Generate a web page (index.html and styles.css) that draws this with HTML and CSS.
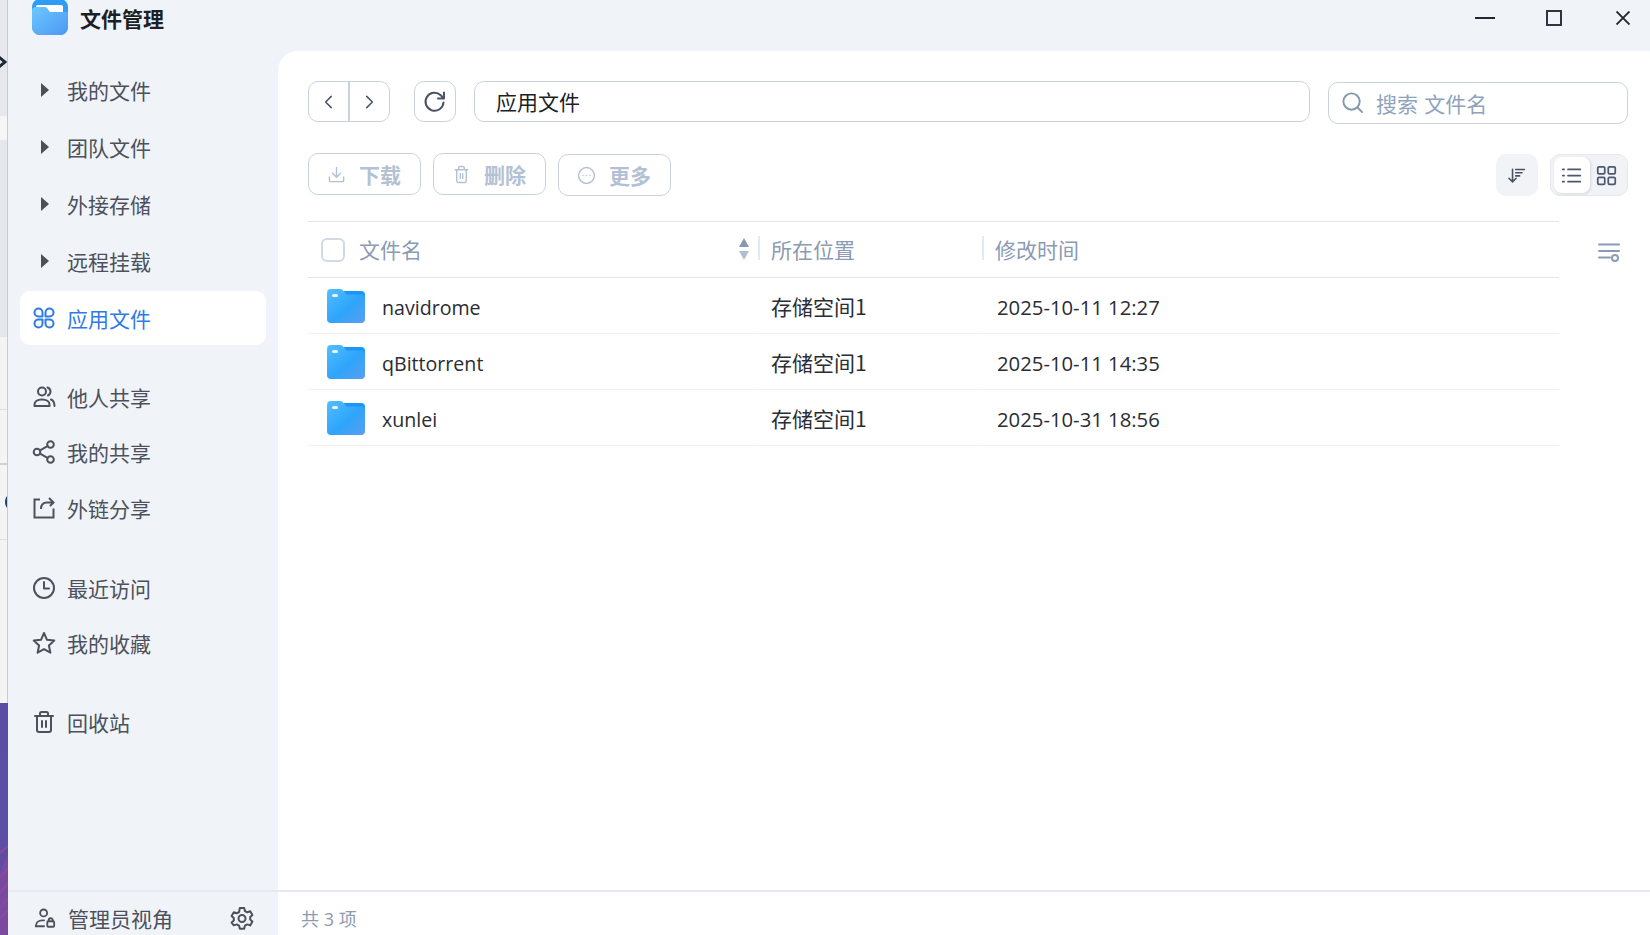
FILE: index.html
```html
<!DOCTYPE html>
<html lang="zh-CN">
<head>
<meta charset="utf-8">
<title>文件管理</title>
<link rel="stylesheet" href="styles.css">
</head>
<body>
<div class="desk">
  <div class="seg seg-a"><svg class="desk-glyph" viewBox="0 0 8 14"><path d="M-1 2 L5 7 L-1 12" fill="none" stroke="#1c2a3a" stroke-width="3"/></svg></div>
  <div class="seg seg-b"></div>
  <div class="seg seg-c"></div>
  <div class="seg seg-d"></div>
  <div class="seg seg-e"></div>
  <div class="seg seg-f"><span class="desk-c"></span></div>
  <div class="seg seg-g"></div>
  <div class="seg seg-h"><svg class="desk-lines" viewBox="0 0 8 232" preserveAspectRatio="none"><path d="M0 150L8 143M0 175L8 165M0 190L8 180M0 205L8 195M0 215L8 207" stroke="#8a4a9e" stroke-width="2" fill="none"/><path d="M0 232V170L8 150V226L7 232Z" fill="#8a4a9e" opacity=".55"/></svg></div>
</div>
<div class="window">
  <header class="titlebar">
    <div class="brand">
      <svg class="logo" viewBox="0 0 36 36"><defs><linearGradient id="lg" x1="0" y1="0" x2="1" y2="1"><stop offset="0" stop-color="#6cc8ff"/><stop offset="1" stop-color="#4c97f3"/></linearGradient></defs><rect width="36" height="36" rx="8" fill="#2f9df5"/><rect x="4" y="6" width="27" height="10" rx="2" fill="#fff"/><path d="M0 12a4 4 0 0 1 4-4h9a3 3 0 0 1 2 1l3 4h18v15a8 8 0 0 1-8 8H8a8 8 0 0 1-8-8z" fill="url(#lg)"/></svg>
      <span class="app-name">文件管理</span>
    </div>
    <div class="win-controls">
      <svg class="win-min" viewBox="0 0 20 2"><path d="M0 1H20" stroke="#22262e" stroke-width="2"/></svg>
      <svg class="win-max" viewBox="0 0 16 16"><rect x="1" y="1" width="14" height="14" fill="none" stroke="#2e3440" stroke-width="2"/></svg>
      <svg class="win-close" viewBox="0 0 14 14"><path d="M0.5 0.5L13.5 13.5M13.5 0.5L0.5 13.5" stroke="#22262e" stroke-width="1.9"/></svg>
    </div>
  </header>
  <div class="content">
    <aside class="sidebar">
      <nav class="nav">
        <div class="group group-tree">
          <div class="item"><span class="ico"><i class="caret"></i></span>我的文件</div>
          <div class="item"><span class="ico"><i class="caret"></i></span>团队文件</div>
          <div class="item"><span class="ico"><i class="caret"></i></span>外接存储</div>
          <div class="item"><span class="ico"><i class="caret"></i></span>远程挂载</div>
          <div class="item active"><span class="ico"><svg class="ic" viewBox="0 0 24 24"><path d="M10.5 10.5H6.5a4 4 0 1 1 4-4zM13.5 10.5h4a4 4 0 1 0-4-4zM10.5 13.5H6.5a4 4 0 1 0 4 4zM13.5 13.5h4a4 4 0 1 1-4 4z"/></svg></span>应用文件</div>
        </div>
        <div class="group group-share">
          <div class="item"><span class="ico"><svg class="ic" viewBox="0 0 24 24"><circle cx="10" cy="6.500" r="4"/><path d="M2.500 21v-1.500c0-3 3-5 7.500-5s7.500 2 7.500 5V21zM15.500 2.500c2 .8 3 2.200 3 4s-1 3.200-2.500 4M19 14.500c2 .8 3.500 2.500 3.500 6.500"/></svg></span>他人共享</div>
          <div class="item"><span class="ico"><svg class="ic" viewBox="0 0 24 24"><circle cx="18.500" cy="4.500" r="3.300"/><circle cx="5" cy="12" r="3.300"/><circle cx="18.500" cy="19.500" r="3.300"/><path d="M8 10.300l7.500-4.200M8 13.700l7.500 4.200"/></svg></span>我的共享</div>
          <div class="item"><span class="ico"><svg class="ic ic-sq" viewBox="0 0 24 24"><path d="M8 3.500H2.500v18h19v-9M9 13c0-4 2-6.500 6-6.500h6M17 2l4.500 4.500L18 10"/></svg></span>外链分享</div>
        </div>
        <div class="group group-recent">
          <div class="item"><span class="ico"><svg class="ic" viewBox="0 0 24 24"><circle cx="12" cy="12" r="10"/><path d="M12 6v6.500h5"/></svg></span>最近访问</div>
          <div class="item"><span class="ico"><svg class="ic" viewBox="0 0 24 24"><path d="M12 2l3 6.800 7.300.8-5.400 4.900 1.500 7.200L12 18.100l-6.400 3.600 1.500-7.200L1.700 9.600 9 8.800z"/></svg></span>我的收藏</div>
        </div>
        <div class="group group-trash">
          <div class="item"><span class="ico"><svg class="ic" viewBox="0 0 24 24"><path d="M3 6h18M8 6V3.500a1.500 1.500 0 0 1 1.500-1.500h5A1.500 1.500 0 0 1 16 3.500V6M5 6v14a2 2 0 0 0 2 2h10a2 2 0 0 0 2-2V6M10 11v6M14 11v6"/></svg></span>回收站</div>
        </div>
      </nav>
      <footer class="side-foot">
        <span class="ico"><svg class="ic ic-admin" viewBox="0 0 24 24"><circle cx="10.500" cy="6.500" r="3.800"/><path d="M2 21c0-4 3-6.500 7-6.500h2"/><path d="M2 21h9"/><rect x="14.500" y="15.500" width="7.500" height="6" rx="1"/><path d="M16 15.500v-1a2.200 2.200 0 0 1 4.500 0v1"/></svg></span>
        <span class="foot-label">管理员视角</span>
        <svg class="ic gear" viewBox="0 0 24 24"><path d="M9.800 2h4.400l.7 3 2.400 1.300 2.900-1 2.200 3.700-2.200 2v2.600l2.200 2-2.200 3.800-2.900-1-2.400 1.300-.7 3H9.800l-.7-3-2.400-1.300-2.900 1L1.600 16.600l2.200-2V12l-2.200-2 2.200-3.700 2.900 1L9.100 6z"/><circle cx="12" cy="12.500" r="3.500"/></svg>
      </footer>
    </aside>
    <main class="main">
      <div class="panel">
        <div class="toolbar">
          <div class="nav-btns">
            <button class="nbtn nbtn-prev"><svg class="ic ic-sm" viewBox="0 0 24 24"><path d="M15 4.500L7.500 12l7.500 7.500"/></svg></button>
            <button class="nbtn nbtn-next"><svg class="ic ic-sm" viewBox="0 0 24 24"><path d="M9 4.500l7.500 7.500L9 19.500"/></svg></button>
          </div>
          <button class="refresh"><svg class="ic ic-re" viewBox="0 0 24 24"><path d="M20.500 12.500a9 9 0 1 1-2.800-7.300L20.500 8M21 2.500V8.500h-6"/></svg></button>
          <div class="path">应用文件</div>
          <div class="search">
            <svg class="ic ic-search" viewBox="0 0 24 24"><circle cx="11" cy="11" r="8.500"/><path d="M17.500 17.500L22 22"/></svg>
            <span class="ph">搜索 文件名</span>
          </div>
        </div>
        <div class="actions">
          <button class="act"><svg class="ic" viewBox="0 0 24 24"><path d="M12 3v12M7 10.500l5 5 5-5M3 15v4.500a1.500 1.500 0 0 0 1.500 1.500h15a1.500 1.500 0 0 0 1.500-1.500V15"/></svg>下载</button>
          <button class="act"><svg class="ic" viewBox="0 0 24 24"><path d="M4 6h16M8.500 6V3.500A1.500 1.500 0 0 1 10 2h4a1.500 1.500 0 0 1 1.500 1.500V6M6 6v14a2 2 0 0 0 2 2h8a2 2 0 0 0 2-2V6M10.500 11v6M13.500 11v6"/></svg>删除</button>
          <button class="act act-low"><svg class="ic" viewBox="0 0 24 24"><circle cx="12" cy="12" r="10"/><path class="dots" d="M7.200 12h.6M11.700 12h.6M16.200 12h.6"/></svg>更多</button>
          <div class="spacer"></div>
          <button class="sort"><svg class="ic ic-sort" viewBox="0 0 24 24"><path d="M7 4v16M2.500 15.500L7 20l4.500-4.500M11 4.500h11M11 8.500h8M11 12.500h5"/></svg></button>
          <div class="views">
            <button class="view on"><svg class="ic ic-view" viewBox="0 0 24 24"><path d="M8 5h14M8 12h14M8 19h14M2 5h1.500M2 12h1.500M2 19h1.500"/></svg></button>
            <button class="view view-grid"><svg class="ic ic-view" viewBox="0 0 24 24"><rect x="2" y="2" width="8" height="8" rx="1.500"/><rect x="14" y="2" width="8" height="8" rx="1.500"/><rect x="2" y="14" width="8" height="8" rx="1.500"/><rect x="14" y="14" width="8" height="8" rx="1.500"/></svg></button>
          </div>
        </div>
        <div class="list-wrap">
          <div class="table">
            <div class="thead">
              <div class="th th-name"><i class="check"></i><span>文件名</span><span class="arrows"><i class="up"></i><i class="down"></i></span></div>
              <div class="th th-loc">所在位置</div>
              <div class="th th-time">修改时间</div>
            </div>
            <div class="row">
              <div class="td td-name"><svg class="folder" viewBox="0 0 38 34"><use href="#fold"/></svg>navidrome</div>
              <div class="td td-loc">存储空间1</div>
              <div class="td td-time">2025-10-11 12:27</div>
            </div>
            <div class="row">
              <div class="td td-name"><svg class="folder" viewBox="0 0 38 34"><use href="#fold"/></svg>qBittorrent</div>
              <div class="td td-loc">存储空间1</div>
              <div class="td td-time">2025-10-11 14:35</div>
            </div>
            <div class="row">
              <div class="td td-name"><svg class="folder" viewBox="0 0 38 34"><use href="#fold"/></svg>xunlei</div>
              <div class="td td-loc">存储空间1</div>
              <div class="td td-time">2025-10-31 18:56</div>
            </div>
          </div>
          <div class="col-set"><svg class="ic ic-col" viewBox="0 0 22 22"><path d="M1 2.500h20M1 9h20M1 15.500h11"/><circle cx="17" cy="16" r="3"/></svg></div>
        </div>
      </div>
      <footer class="main-foot">共 3 项</footer>
    </main>
  </div>
</div>
<svg class="defs" width="0" height="0"><defs>
  <linearGradient id="fg" x1="0" y1="0" x2="1" y2="1"><stop offset="0" stop-color="#52bfff"/><stop offset=".55" stop-color="#2ea4fb"/><stop offset="1" stop-color="#5a9ff0"/></linearGradient>
  <symbol id="fold" viewBox="0 0 38 34"><path d="M14 2h20a4 4 0 0 1 4 4v6H14z" fill="#1b97f3"/><path d="M0 4a4 4 0 0 1 4-4h9a4 4 0 0 1 2.500 1l4.500 4.500h14a4 4 0 0 1 4 3V30a4 4 0 0 1-4 4H4a4 4 0 0 1-4-4z" fill="url(#fg)"/><rect x="5" y="5" width="6" height="3" rx="1.500" fill="#e8f6ff"/></symbol>
</defs></svg>
</body>
</html>
```
FILE: styles.css
```css
* { box-sizing: border-box; }
html, body { margin: 0; height: 935px; overflow: hidden; }
body {
  display: flex;
  width: 1650px;
  font-family: "Noto Sans CJK SC", "Open Sans", sans-serif;
  font-size: 21px;
  background: #f0f4f9;
}
button { font: inherit; padding: 0; margin: 0; background: none; border: 0; }
.defs { position: absolute; }

/* desktop strip behind the window */
.desk { width: 8px; height: 935px; display: flex; flex-direction: column; flex: none; border-right: 1px solid #c9cbd0; }
.seg { position: relative; flex: none; overflow: hidden; }
.seg-a { height: 116px; background: #e6e8ed; }
.seg-b { height: 24px; background: #f6f6f7; }
.seg-c { height: 197px; background: #e4e7ec; }
.seg-d { height: 73px; background: #f4f4f5; border-bottom: 1px solid #dcdee2; }
.seg-e { height: 55px; background: #f4f4f5; border-bottom: 2px solid #cfd3da; }
.seg-f { height: 75px; background: #f4f4f5; border-bottom: 1px solid #dcdee2; }
.seg-g { height: 163px; background: #f4f4f5; }
.seg-h { height: 232px; background: linear-gradient(180deg, #5b4da4, #5a4ea6 50%, #6a4a9e); margin-right: -1px; }
.desk-glyph { position: absolute; left: 0; top: 55px; width: 8px; height: 14px; }
.desk-c { position: absolute; left: 5px; top: 31px; width: 6px; height: 12px; border: 2px solid #1d3f78; border-radius: 50%; }
.desk-lines { position: absolute; inset: 0; width: 100%; height: 100%; }

.window { width: 1642px; height: 935px; display: flex; flex-direction: column; }

.titlebar { height: 51px; flex: none; display: flex; align-items: flex-start; justify-content: space-between; }
.brand { display: flex; align-items: center; margin-left: 24px; gap: 12px; height: 36px; margin-top: -1px; }
.logo { width: 36px; height: 36px; }
.app-name { font-weight: 700; color: #1c1f26; line-height: 42px; margin-top: 1px; }
.win-controls { display: flex; align-items: flex-start; }
.win-min { width: 20px; height: 2px; margin-top: 17px; }
.win-max { width: 16px; height: 16px; margin-top: 10px; margin-left: 51px; }
.win-close { width: 14px; height: 14px; margin-top: 11px; margin-left: 54px; margin-right: 20px; }

.content { flex: 1; display: flex; min-height: 0; }

.sidebar { width: 270px; flex: none; display: flex; flex-direction: column; }
.nav { flex: 1; padding: 11.500px 12px 0; display: flex; flex-direction: column; }
.group { display: flex; flex-direction: column; gap: 3.500px; }
.group-tree { gap: 3px; }
.group-share { margin-top: 26px; }
.group-recent { margin-top: 28.500px; gap: 3px; }
.group-trash { margin-top: 27px; }
.item { height: 52px; display: flex; align-items: center; padding-left: 12px; color: #4c515c; border-radius: 10px; line-height: 30px; }
.group-tree .item { height: 54px; padding-top: 1px; }
.item.active { background: #fff; color: #2f7ae5; }
.ico { width: 24px; height: 24px; margin-right: 11px; display: flex; align-items: center; justify-content: center; flex: none; }
.caret { width: 0; height: 0; border-left: 8px solid #4a4f5a; border-top: 7px solid transparent; border-bottom: 7px solid transparent; margin-top: 0; margin-left: 2px; }
.ic { width: 24px; height: 24px; fill: none; stroke: currentColor; stroke-width: 2; stroke-linejoin: round; stroke-linecap: round; flex: none; }
.ic-sq { stroke-linejoin: miter; stroke-linecap: butt; }

.side-foot { height: 45px; flex: none; border-top: 2px solid #e5eaf2; display: flex; align-items: center; padding-left: 24px; color: #4c515c; }
.side-foot .ico { margin-right: 12px; margin-top: 9px; }
.ic-admin { width: 22px; height: 22px; margin-left: 2px; }
.foot-label { line-height: 30px; margin-top: 9px; }
.gear { margin-left: auto; margin-right: 24px; margin-top: 8px; }

.main { flex: 1; display: flex; flex-direction: column; min-width: 0; }
.panel { flex: 1; background: #fff; border-top-left-radius: 20px; padding: 30px 22px 0 30px; min-height: 0; }
.main-foot { height: 45px; flex: none; background: #fff; border-top: 2px solid #e5eaf2; padding-left: 23px; color: #8e9bb0; font-size: 18px; line-height: 54px; font-family: "Open Sans", "Noto Sans CJK SC", sans-serif; }

.toolbar { display: flex; align-items: flex-start; height: 42px; }
.nav-btns { width: 82px; height: 41px; border: 1.500px solid #c9d3e0; border-radius: 10px; display: flex; flex: none; }
.nbtn { display: flex; align-items: center; justify-content: center; color: #4a5363; }
.nbtn-prev { width: 41px; flex: none; border-right: 2px solid #c9d3e0; }
.nbtn-next { flex: 1; padding-right: 1px; }
.ic-sm { width: 18px; height: 18px; }
.refresh { width: 42px; height: 41px; margin-left: 24px; border: 1.500px solid #c9d3e0; border-radius: 10px; display: flex; align-items: center; justify-content: center; color: #4a5363; flex: none; }
.ic-re { width: 24px; height: 24px; }
.path { width: 836px; height: 41px; margin-left: 18px; border: 1.500px solid #c9d3e0; border-radius: 10px; padding-left: 21px; line-height: 39px; color: #1b1f27; flex: none; }
.search { width: 300px; height: 41.500px; margin-left: 18px; margin-top: 1px; border: 1.500px solid #c9d3e0; border-radius: 10px; display: flex; align-items: center; padding-left: 12px; color: #8fa3bd; flex: none; }
.ic-search { width: 23px; height: 23px; margin-right: 12px; color: #8597ae; }
.ph { word-spacing: 1.500px; }

.actions { display: flex; align-items: flex-start; margin-top: 30px; height: 43px; }
.act { width: 113px; height: 42px; border: 1.500px solid #c9d3e0; border-radius: 10px; margin-right: 12px; display: flex; align-items: center; padding-left: 18px; gap: 13px; color: #b3c1d4; font-weight: 700; line-height: 30px; flex: none; }
.act .ic { width: 19px; height: 19px; stroke-width: 1.800; }
.act-low { margin-top: 1px; }
.dots { stroke-width: 1.200; }
.spacer { flex: 1; }
.sort { width: 42px; height: 42px; margin-top: 1px; background: #f2f3f6; border-radius: 10px; display: flex; align-items: center; justify-content: center; color: #4a5363; flex: none; padding-right: 2px; }
.ic-sort { width: 19px; height: 19px; }
.views { width: 78px; height: 42px; margin-top: 1px; margin-left: 12px; background: #f2f3f6; border: 1px solid #e6e8ed; border-radius: 10px; display: flex; align-items: center; padding-left: 3px; flex: none; }
.view { width: 36px; height: 36px; display: flex; align-items: center; justify-content: center; color: #4a5870; border-radius: 8px; flex: none; }
.view.on { background: #fff; box-shadow: 1px 1px 3px rgba(120,130,150,.25); margin-right: 1px; padding-right: 2px; }
.view-grid { width: 30px; }
.ic-view { width: 21px; height: 21px; }

.list-wrap { display: flex; margin-top: 25px; }
.table { width: 1251px; flex: none; border-top: 1px solid #e3e5ea; }
.thead, .row { display: grid; grid-template-columns: 450px 224px 577px; }
.thead { height: 56px; border-bottom: 1px solid #e3e5ea; color: #8b9bb4; }
.th { display: flex; align-items: center; line-height: 30px; padding-bottom: 2px; }
.th-name { padding-left: 13px; position: relative; }
.check { width: 24px; height: 24px; border: 2px solid #d0d9e5; border-radius: 6px; margin-right: 14px; margin-top: 2px; flex: none; }
.arrows { margin-left: auto; margin-right: 9px; display: flex; flex-direction: column; gap: 4px; }
.arrows i { display: block; width: 0; height: 0; border-left: 5.500px solid transparent; border-right: 5.500px solid transparent; }
.up { border-bottom: 9px solid #8799b3; }
.down { border-top: 9px solid #b0bed2; }
.th-loc, .th-time { position: relative; padding-left: 13px; }
.th-loc::before, .th-time::before { content: ""; position: absolute; left: 0; top: 14px; width: 2px; height: 24px; background: #e4e8ef; }
.row { height: 56px; }
.td { display: flex; align-items: center; color: #2a2d33; border-bottom: 1px solid #eff0f3; margin-right: 2px; font-family: "Open Sans", "Noto Sans CJK SC", sans-serif; font-size: 20px; white-space: nowrap; padding-top: 3px; }
.td-name { padding-left: 19px; font-size: 19.600px; }
.folder { width: 38px; height: 34px; margin-right: 17px; margin-bottom: 2px; flex: none; }
.td-loc { padding-left: 13px; padding-top: 1px; font-family: "Noto Sans CJK SC", sans-serif; font-size: 21px; }
.td-time { padding-left: 15px; margin-right: 0; font-size: 20.300px; }
.col-set { flex: 1; display: flex; justify-content: flex-end; padding-top: 21px; padding-right: 8px; color: #8b9bb4; }
.ic-col { width: 22px; height: 22px; }
```
